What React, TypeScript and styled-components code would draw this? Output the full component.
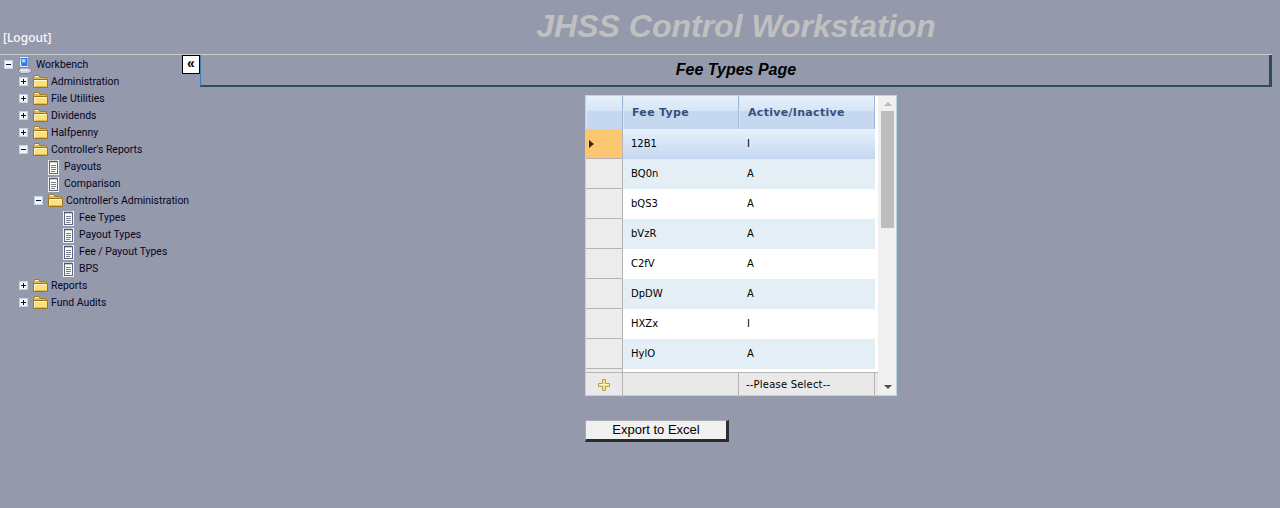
import styled, { createGlobalStyle } from 'styled-components';

const GlobalStyle = createGlobalStyle`
  html, body {
    margin: 0;
    padding: 0;
    background: #9599ac;
  }
`;

interface TreeNode {
  label: string;
  depth: number;
  kind: 'computer' | 'folder' | 'page';
  toggle?: 'plus' | 'minus';
}

const treeNodes: TreeNode[] = [
  { label: 'Workbench', depth: 0, kind: 'computer', toggle: 'minus' },
  { label: 'Administration', depth: 1, kind: 'folder', toggle: 'plus' },
  { label: 'File Utilities', depth: 1, kind: 'folder', toggle: 'plus' },
  { label: 'Dividends', depth: 1, kind: 'folder', toggle: 'plus' },
  { label: 'Halfpenny', depth: 1, kind: 'folder', toggle: 'plus' },
  { label: "Controller's Reports", depth: 1, kind: 'folder', toggle: 'minus' },
  { label: 'Payouts', depth: 2, kind: 'page' },
  { label: 'Comparison', depth: 2, kind: 'page' },
  { label: "Controller's Administration", depth: 2, kind: 'folder', toggle: 'minus' },
  { label: 'Fee Types', depth: 3, kind: 'page' },
  { label: 'Payout Types', depth: 3, kind: 'page' },
  { label: 'Fee / Payout Types', depth: 3, kind: 'page' },
  { label: 'BPS', depth: 3, kind: 'page' },
  { label: 'Reports', depth: 1, kind: 'folder', toggle: 'plus' },
  { label: 'Fund Audits', depth: 1, kind: 'folder', toggle: 'plus' },
];

const feeRows = [
  ['12B1', 'I'],
  ['BQ0n', 'A'],
  ['bQS3', 'A'],
  ['bVzR', 'A'],
  ['C2fV', 'A'],
  ['DpDW', 'A'],
  ['HXZx', 'I'],
  ['HylO', 'A'],
];

function ToggleIcon({ type }: { type: 'plus' | 'minus' }) {
  return (
    <svg width="9" height="9" viewBox="0 0 9 9">
      <rect x="0" y="0" width="9" height="9" fill="#f2f5f9" />
      <rect x="0.5" y="0.5" width="8" height="8" fill="none" stroke="#c3d3e6" />
      <rect x="2" y="4" width="5" height="1" fill="#111" />
      {type === 'plus' && <rect x="4" y="2" width="1" height="5" fill="#111" />}
    </svg>
  );
}

function FolderIcon() {
  return (
    <svg width="16" height="13" viewBox="0 0 16 13">
      <path d="M1.5 2.5 L2.5 0.5 H7 L8 2.5 H14.5 V12.5 H1.5 Z" fill="#e2bb5c" stroke="#a07c30" />
      <path d="M3 1.5 H6.5" stroke="#fff3c0" />
      <path d="M1.5 4.5 H15.5 V12.5 H1.5 Z" fill="#fedf7e" stroke="#96742c" />
      <path d="M2.5 5.5 H14.5" stroke="#fff8d4" />
      <path d="M2.5 6 V11.5" stroke="#fff2b0" />
      <path d="M3 11.5 H14.5" stroke="#e3b94f" />
    </svg>
  );
}

function PageIcon() {
  return (
    <svg width="14" height="16" viewBox="0 0 14 16">
      <rect x="1" y="1" width="11" height="15" fill="#f1f2f8" />
      <rect x="2.5" y="2.5" width="8" height="12" fill="#fdfdf8" stroke="#5f6487" />
      <path d="M3 1.5 V3.5 M5 1.5 V3.5 M7 1.5 V3.5 M9 1.5 V3.5" stroke="#4a4a4a" />
      <path d="M4 6.5 H9 M4 8.5 H9 M4 10.5 H9 M4 12.5 H8" stroke="#787c88" />
    </svg>
  );
}

function ComputerIcon() {
  return (
    <svg width="16" height="18" viewBox="0 0 16 18">
      <path d="M2.5 0.5 H11.5 V11.5 H4 L2.5 10 Z" fill="#e6ebf6" stroke="#7f86a3" strokeWidth="0.8" />
      <path d="M3.5 2 H10.5 V10 H4.5 Z" fill="#2a78ee" />
      <path d="M4.5 3 H8.5 V6.5 H5 Z" fill="#a8d0fb" />
      <path d="M3 12 H12 L14.5 14 V16 L11 17.5 H4 L1.5 15.5 Z" fill="#cdd0e6" stroke="#71769a" strokeWidth="0.8" />
      <path d="M3.5 14 H11" stroke="#ffffff" />
    </svg>
  );
}

export default function App() {
  return (
    <Page>
      <GlobalStyle />
      <Header>
        <LogoutSlot>
          <LogoutLink>[Logout]</LogoutLink>
        </LogoutSlot>
        <AppTitle>JHSS Control Workstation</AppTitle>
      </Header>
      <Body>
        <Sidebar>
          <Tree>
            {treeNodes.map((node) => (
              <TreeRow key={node.label} $depth={node.depth}>
                <ToggleSlot>{node.toggle && <ToggleIcon type={node.toggle} />}</ToggleSlot>
                {node.kind === 'computer' && <ComputerIcon />}
                {node.kind === 'folder' && <FolderIcon />}
                {node.kind === 'page' && <PageIcon />}
                <TreeLabel>{node.label}</TreeLabel>
              </TreeRow>
            ))}
          </Tree>
          <CollapseButton>«</CollapseButton>
        </Sidebar>
        <Main>
          <PageTitleBar>Fee Types Page</PageTitleBar>
          <Content>
            <GridFrame>
              <GridMain>
                <GridHeader>
                  <HeaderCell />
                  <HeaderCell>Fee Type</HeaderCell>
                  <HeaderCell>Active/Inactive</HeaderCell>
                </GridHeader>
                <RowsViewport>
                  {feeRows.map(([code, status], index) => (
                    <DataRow key={code}>
                      <RowSelector $active={index === 0}>{index === 0 && <RowArrow />}</RowSelector>
                      <DataCells $variant={index === 0 ? 'selected' : index % 2 === 1 ? 'alt' : 'plain'}>
                        <CodeCell>{code}</CodeCell>
                        <StatusCell>{status}</StatusCell>
                      </DataCells>
                    </DataRow>
                  ))}
                  <PartialSelector />
                </RowsViewport>
                <InsertRow>
                  <InsertCell>
                    <svg width="12" height="12" viewBox="0 0 12 12">
                      <path
                        d="M4.5 0.5 H7.5 V4.5 H11.5 V7.5 H7.5 V11.5 H4.5 V7.5 H0.5 V4.5 H4.5 Z"
                        fill="#fde35c"
                        stroke="#bb9c5c"
                      />
                      <path d="M1.5 5.5 H10.5" stroke="#fff9c8" />
                    </svg>
                  </InsertCell>
                  <InsertCell />
                  <SelectCell>--Please Select--</SelectCell>
                </InsertRow>
              </GridMain>
              <ScrollTrack>
                <ScrollArrow $up />
                <ScrollThumb />
                <ScrollArrow />
              </ScrollTrack>
            </GridFrame>
            <ExportButton>Export to Excel</ExportButton>
          </Content>
        </Main>
      </Body>
    </Page>
  );
}

const Page = styled.div`
  min-height: 100vh;
  padding-right: 8px;
  box-sizing: border-box;
  background: #9599ac;
  overflow: hidden;
`;

const Header = styled.header`
  display: flex;
  height: 54px;
  border-bottom: 1px solid #c9cacc;
`;

const LogoutSlot = styled.div`
  width: 200px;
  flex: none;
  display: flex;
  align-items: flex-end;
  padding: 0 0 8px 3px;
  box-sizing: border-box;
`;

const LogoutLink = styled.a`
  font-family: 'Noto Sans', 'Liberation Sans', sans-serif;
  font-size: 12px;
  line-height: 16px;
  font-weight: 500;
  color: #fbfbfb;
`;

const AppTitle = styled.h1`
  flex: 1;
  margin: 0;
  padding-top: 8px;
  text-align: center;
  font-family: 'Liberation Sans', Arial, sans-serif;
  font-size: 32px;
  line-height: 37px;
  font-weight: bold;
  font-style: italic;
  color: #c0c0c0;
`;

const Body = styled.div`
  display: flex;
`;

const Sidebar = styled.nav`
  position: relative;
  width: 200px;
  flex: none;
`;

const Tree = styled.ul`
  list-style: none;
  margin: 0;
  padding: 1px 0 0;
`;

const TreeRow = styled.li<{ $depth: number }>`
  display: flex;
  align-items: center;
  height: 17px;
  padding-left: ${(p) => 4 + p.$depth * 15}px;
  white-space: nowrap;
`;

const ToggleSlot = styled.span`
  display: flex;
  align-items: center;
  width: 13px;
  flex: none;
`;

const TreeLabel = styled.span`
  margin-left: 3px;
  font-family: 'Roboto', 'Liberation Sans', sans-serif;
  font-size: 10.45px;
  line-height: 17px;
  color: #05051e;
`;

const CollapseButton = styled.button`
  position: absolute;
  top: 0;
  left: 182px;
  width: 18px;
  height: 19px;
  padding: 0 0 3px;
  box-sizing: border-box;
  background: #fff;
  border: 1px solid #000;
  font-family: 'Liberation Sans', Arial, sans-serif;
  font-size: 14px;
  line-height: 14px;
  font-weight: bold;
  color: #000;
`;

const Main = styled.main`
  flex: 1;
  min-width: 0;
`;

const PageTitleBar = styled.div`
  height: 30px;
  padding-left: 2px;
  border-left: 1px solid #3f7fb5;
  border-right: 3px solid #2f4f4f;
  border-bottom: 2px solid #2f4f4f;
  margin-bottom: 8px;
  text-align: center;
  font-family: 'Liberation Sans', Arial, sans-serif;
  font-size: 16px;
  line-height: 30px;
  font-weight: bold;
  font-style: italic;
  color: #000;
`;

const Content = styled.div`
  margin-left: 385px;
  width: 312px;
`;

const GridFrame = styled.div`
  display: flex;
  height: 301px;
  box-sizing: border-box;
  border: 1px solid #bcd2ea;
  background: #fff;
`;

const GridMain = styled.div`
  width: 292px;
  flex: none;
  display: flex;
  flex-direction: column;
`;

const gridColumns = '37px 116px 136px';

const GridHeader = styled.div`
  display: grid;
  grid-template-columns: ${gridColumns};
  height: 33px;
  flex: none;
`;

const HeaderCell = styled.div`
  box-sizing: border-box;
  padding-left: 8px;
  border-left: 1px solid #dbe8f8;
  border-right: 1px solid #9db6d8;
  border-bottom: 1px solid #8ba7cd;
  background: linear-gradient(to bottom, #e8f1fc 0%, #d5e4f7 45%, #c6d8f0 46%, #c6d8f0 100%);
  font-family: 'DejaVu Sans', Verdana, sans-serif;
  font-size: 11px;
  line-height: 33px;
  font-weight: bold;
  letter-spacing: 0.3px;
  color: #3a4f78;
`;

const RowsViewport = styled.div`
  flex: 1;
  min-height: 0;
  overflow: hidden;
`;

const DataRow = styled.div`
  display: flex;
  height: 30px;
`;

const RowSelector = styled.div<{ $active?: boolean }>`
  display: flex;
  align-items: center;
  width: 37px;
  flex: none;
  box-sizing: border-box;
  background: ${(p) => (p.$active ? '#fdc670' : '#ececec')};
  border-right: 1px solid #b4b4b4;
  border-bottom: 1px solid #b4b4b4;
`;

const PartialSelector = styled(RowSelector)`
  height: 4px;
`;

const RowArrow = styled.span`
  margin-left: 3px;
  border-left: 5px solid #332a18;
  border-top: 4px solid transparent;
  border-bottom: 4px solid transparent;
`;

const rowBackgrounds = {
  selected: 'linear-gradient(to bottom, #e8f1fc 0%, #c5d7f0 100%)',
  alt: '#e3eff4',
  plain: '#fff',
};

const DataCells = styled.div<{ $variant: keyof typeof rowBackgrounds }>`
  display: grid;
  grid-template-columns: 116px 136px;
  width: 252px;
  background: ${(p) => rowBackgrounds[p.$variant]};
  font-family: 'DejaVu Sans', Verdana, sans-serif;
  font-size: 10px;
  line-height: 29px;
  color: #000;
`;

const CodeCell = styled.div`
  padding-left: 8px;
`;

const StatusCell = styled.div`
  padding-left: 8px;
`;

const InsertRow = styled.div`
  display: grid;
  grid-template-columns: ${gridColumns};
  height: 23px;
  flex: none;
  background: #e9e9e9;
  border-top: 1px solid #b4b4b4;
  box-sizing: border-box;
`;

const InsertCell = styled.div`
  display: flex;
  align-items: center;
  justify-content: center;
  box-sizing: border-box;
  border-right: 1px solid #b4b4b4;
`;

const SelectCell = styled.div`
  box-sizing: border-box;
  padding-left: 7px;
  border-right: 1px solid #b4b4b4;
  font-family: 'DejaVu Sans', Verdana, sans-serif;
  font-size: 10px;
  line-height: 24px;
  letter-spacing: 0.2px;
  color: #000;
`;

const ScrollTrack = styled.div`
  flex: 1;
  display: flex;
  flex-direction: column;
  align-items: center;
  background: #f0f0f0;
  padding: 0 2px 0 3px;
`;

const ScrollArrow = styled.span<{ $up?: boolean }>`
  flex: none;
  margin: ${(p) => (p.$up ? '6px 0 5px' : 'auto 0 6px')};
  border-left: 4px solid transparent;
  border-right: 4px solid transparent;
  ${(p) =>
    p.$up ? 'border-bottom: 4px solid #b8b8b8;' : 'border-top: 4px solid #505050;'}
`;

const ScrollThumb = styled.div`
  width: 13px;
  height: 117px;
  flex: none;
  background: #bdbdbd;
`;

const ExportButton = styled.button`
  display: block;
  width: 144px;
  height: 22px;
  margin-top: 24px;
  padding: 0;
  box-sizing: border-box;
  background: #f0f0f0;
  border-style: solid;
  border-color: #a9a9a9 #2c2c2c #2c2c2c #a9a9a9;
  border-width: 1px 3px 3px 1px;
  font-family: 'Liberation Sans', Arial, sans-serif;
  font-size: 13px;
  line-height: 18px;
  color: #000;
`;
